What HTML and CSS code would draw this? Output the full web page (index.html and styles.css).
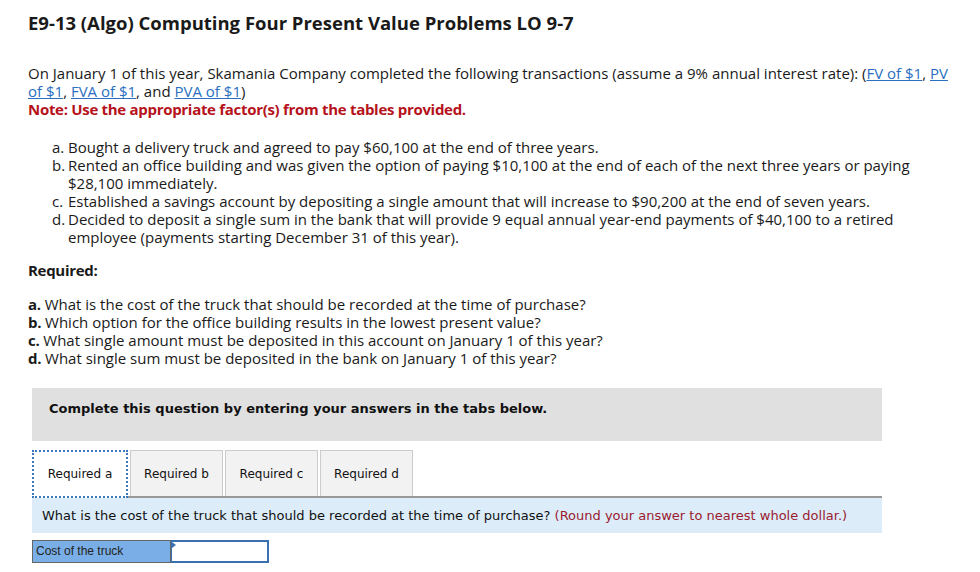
FILE: index.html
```html
<!DOCTYPE html>
<html>
<head>
<meta charset="utf-8">
<link rel="stylesheet" href="styles.css">
</head>
<body>
<div class="page">
  <h1 class="title">E9-13 (Algo) Computing Four Present Value Problems LO 9-7</h1>
  <p class="intro">On January 1 of this year, Skamania Company completed the following transactions (assume a 9% annual interest rate): (<a href="#">FV of $1</a>, <a href="#">PV of $1</a>, <a href="#">FVA of $1</a>, and <a href="#">PVA of $1</a>)<br><span class="note">Note: Use the appropriate factor(s) from the tables provided.</span></p>
  <ol class="trans">
    <li><span class="lbl">a.</span><span>Bought a delivery truck and agreed to pay $60,100 at the end of three years.</span></li>
    <li><span class="lbl">b.</span><span>Rented an office building and was given the option of paying $10,100 at the end of each of the next three years or paying $28,100 immediately.</span></li>
    <li><span class="lbl">c.</span><span>Established a savings account by depositing a single amount that will increase to $90,200 at the end of seven years.</span></li>
    <li><span class="lbl">d.</span><span>Decided to deposit a single sum in the bank that will provide 9 equal annual year-end payments of $40,100 to a retired employee (payments starting December 31 of this year).</span></li>
  </ol>
  <p class="req-head">Required:</p>
  <ul class="reqs">
    <li><b>a.</b> What is the cost of the truck that should be recorded at the time of purchase?</li>
    <li><b>b.</b> Which option for the office building results in the lowest present value?</li>
    <li><b>c.</b> What single amount must be deposited in this account on January 1 of this year?</li>
    <li><b>d.</b> What single sum must be deposited in the bank on January 1 of this year?</li>
  </ul>
  <div class="widget">
    <div class="banner">Complete this question by entering your answers in the tabs below.</div>
    <div class="tabs">
      <div class="tab active">Required a</div>
      <div class="tab">Required b</div>
      <div class="tab">Required c</div>
      <div class="tab">Required d</div>
    </div>
    <div class="prompt">What is the cost of the truck that should be recorded at the time of purchase? <span class="hint">(Round your answer to nearest whole dollar.)</span></div>
    <div class="answer">
      <div class="ans-label">Cost of the truck</div>
      <div class="ans-input"><span class="caret"></span></div>
    </div>
  </div>
</div>
</body>
</html>
```
FILE: styles.css
```css
* { box-sizing: border-box; }
html, body { margin: 0; padding: 0; background: #fff; }
body { font-family: "Open Sans", Lato, sans-serif; color: #1a1a1a; }
.page { padding: 8px 0 0 28px; width: 960px; }
.title { font-size: 18.5px; font-weight: 700; margin: 3px 0 0 0; line-height: 24px; color: #1a1a1a; }
.intro { font-size: 15px; line-height: 18px; margin: 29px 0 0 0; width: 922px; }
.intro a { color: #2a6fc0; text-decoration: underline; }
.note { color: #b5121b; font-weight: 700; letter-spacing: -0.3px; }
.trans { list-style: none; margin: 20px 0 0 24px; padding: 0; font-size: 15px; line-height: 18px; width: 870px; }
.trans li { display: flex; }
.trans .lbl { width: 16px; flex: none; }
.req-head { font-weight: 700; font-size: 15px; letter-spacing: -0.3px; margin: 15px 0 0 0; line-height: 18px; }
.reqs { list-style: none; margin: 16px 0 0 0; padding: 0; font-size: 15px; line-height: 18px; }
.reqs b { letter-spacing: -0.3px; }
.widget { margin-top: 21px; width: 850px; margin-left: 4px; font-family: "DejaVu Sans", sans-serif; }
.banner { background: #e0e0e0; height: 53px; padding: 13px 0 0 17px; font-weight: 700; font-size: 13px; color: #111; }
.tabs { display: flex; margin-top: 9px; border-bottom: 2px solid #999; height: 48px; gap: 2px; }
.tab { width: 93px; height: 46px; background: #f2f2f2; border: 1px solid #ccc; border-bottom: none; font-size: 12px; display: flex; align-items: center; justify-content: center; color: #111; }
.tab.active { background: #fff; width: 96px; border: 2px dotted #3a78c0; height: 48px; margin-bottom: -2px; }
.prompt { background: #dcedf9; height: 35px; padding: 10px 0 0 10px; font-size: 13px; color: #111; }
.hint { color: #9b1b30; }
.answer { display: flex; margin-top: 7px; height: 23px; }
.ans-label { width: 139px; background: #7aaee6; border: 1px solid #666; font-family: "Liberation Sans", Arial, sans-serif; font-size: 12px; padding: 3px 0 0 3px; color: #222; }
.ans-input { width: 98px; border: 2px solid #3a6fb0; border-left: 1px solid #3a6fb0; background: #fff; position: relative; }
.caret { position: absolute; left: 0; top: 0; width: 0; height: 0; border-top: 3px solid transparent; border-bottom: 3px solid transparent; border-left: 4px solid #3a6fb0; }
```
